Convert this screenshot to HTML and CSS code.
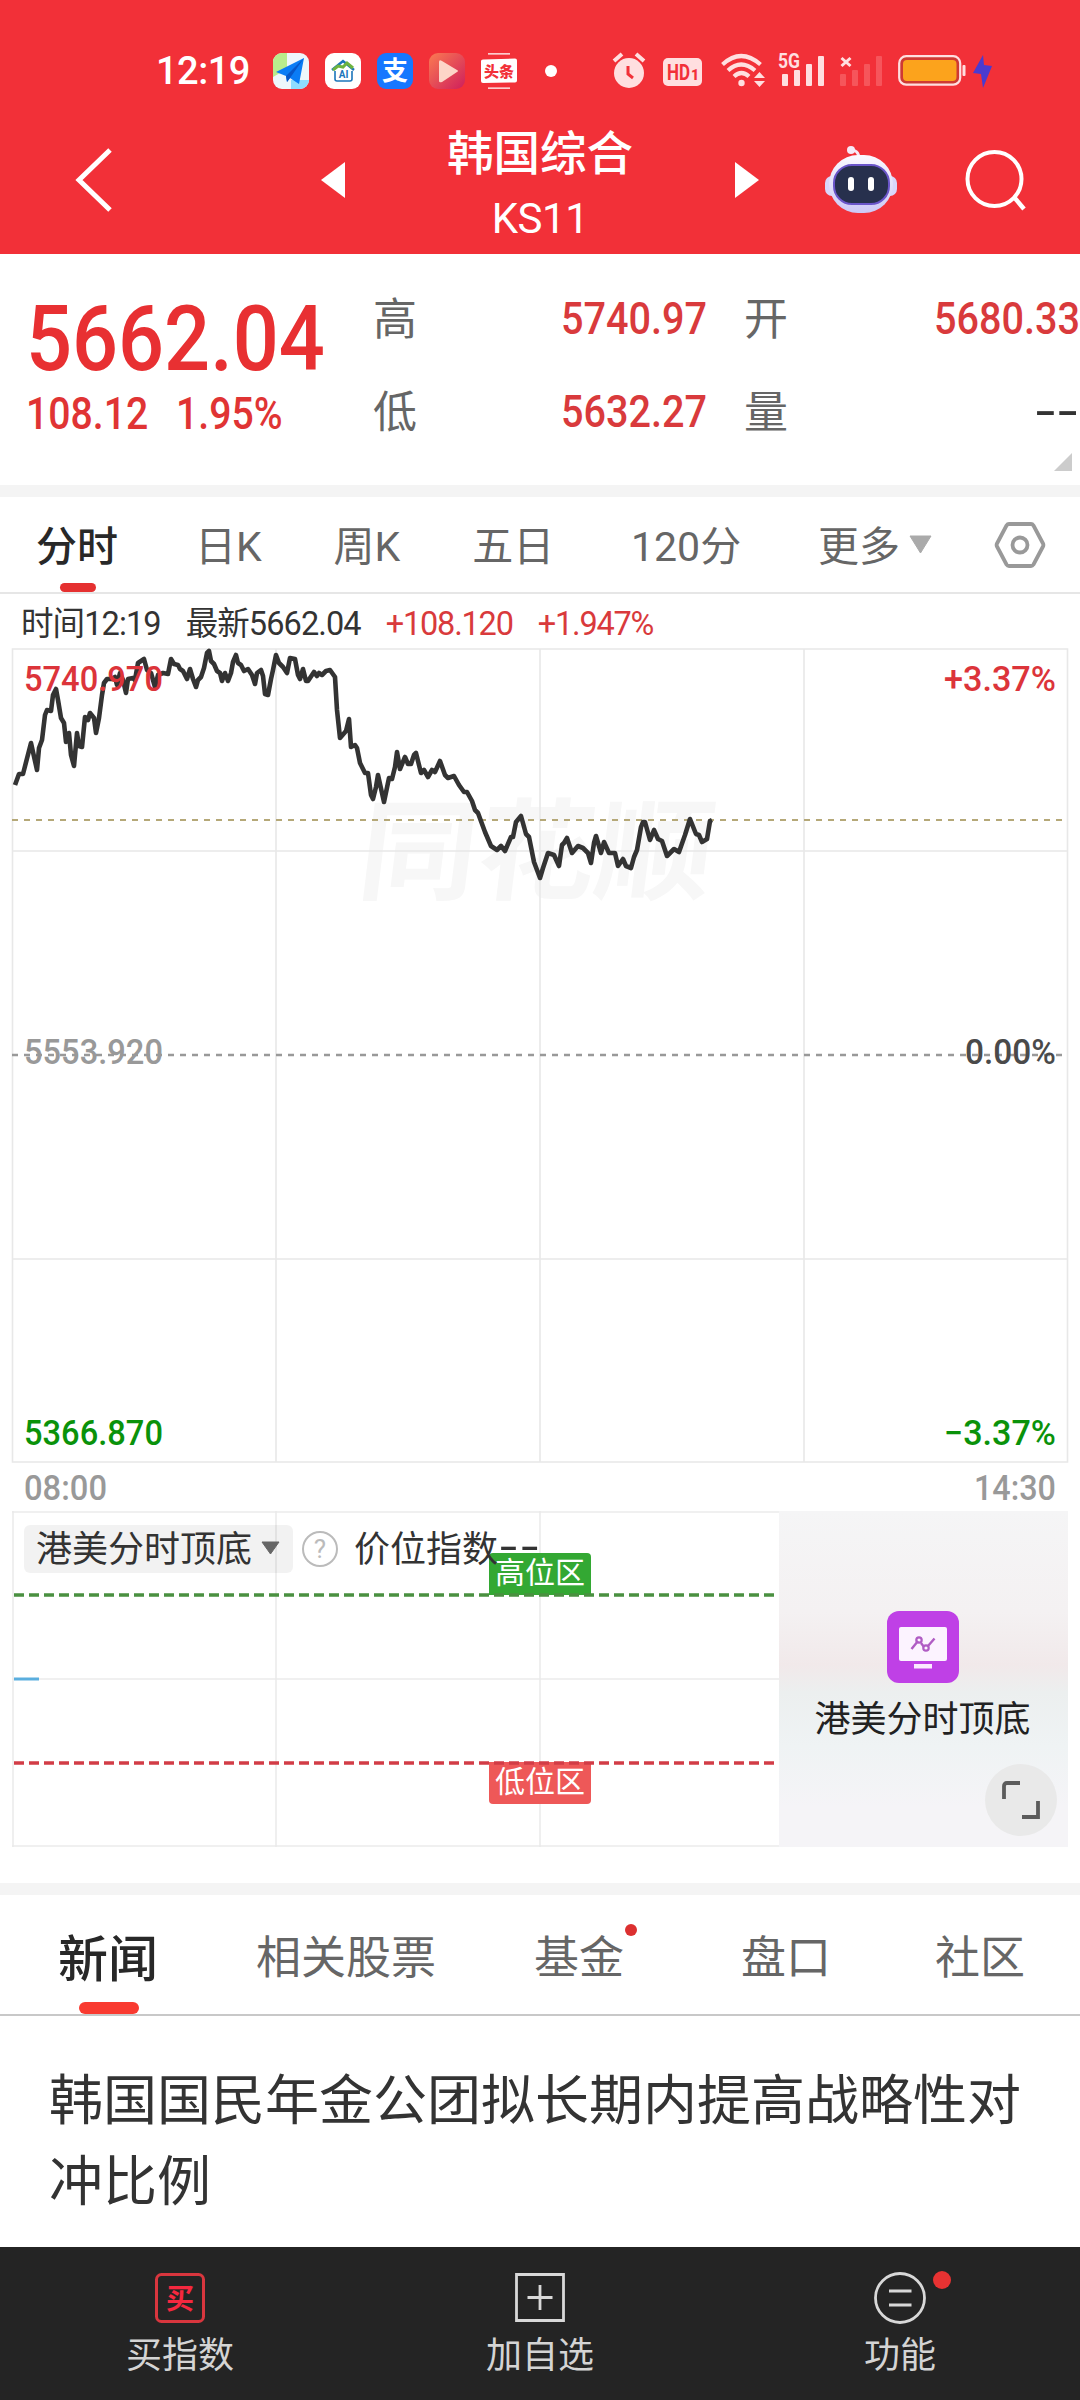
FILE: index.html
```html
<!DOCTYPE html>
<html lang="zh-CN">
<head>
  <meta charset="UTF-8" />
  <meta name="viewport" content="width=device-width, initial-scale=1.0" />
  <title>韩国综合 KS11</title>
  <link rel="stylesheet" href="styles.css">
</head>
<body>
  <header class="top">
    <div class="status">
      <span class="clock">12:19</span>
      <div class="apps">
        <svg width="36" height="36" viewBox="0 0 36 36">
          <rect width="36" height="36" rx="9" fill="#eef6fb"/>
          <path d="M9 0h5v16L0 24V9a9 9 0 0 1 9-9z" fill="#b9ec8c"/>
          <path d="M18 27h18a9 9 0 0 1-9 9h-9z" fill="#8fdcff"/>
          <path d="M31 5L3 19l10 4 1 6 3-4 9 6z" fill="#0a7cf5"/>
          <path d="M31 5L13 23l1 6 3-4z" fill="#0756c8"/>
        </svg>
        <svg width="36" height="36" viewBox="0 0 36 36">
          <rect width="36" height="36" rx="9" fill="#fff"/>
          <path d="M7 17L18 8l11 9" fill="none" stroke="#1b75bb" stroke-width="2.5"/>
          <path d="M8 17l5-4 5 1 4-4 6 5" fill="none" stroke="#6db33f" stroke-width="3"/>
          <path d="M10 18v8q0 2 2 2h13q2 0 2-2v-8" fill="none" stroke="#1b75bb" stroke-width="1.6"/>
          <text x="18.500" y="25" class="app-ai">AI</text>
        </svg>
        <svg width="36" height="36" viewBox="0 0 36 36">
          <rect width="36" height="36" rx="9" fill="#1677ff"/>
          <text x="18" y="27" class="app-pay">支</text>
        </svg>
        <svg width="36" height="36" viewBox="0 0 36 36">
          <defs>
            <linearGradient id="video" x1="0" y1="0" x2="1" y2="1">
              <stop offset="0" stop-color="#fb7a52"/>
              <stop offset="1" stop-color="#cf1f5c"/>
            </linearGradient>
          </defs>
          <rect width="36" height="36" rx="9" fill="url(#video)"/>
          <path d="M10 9q0-3 3-1l15 9q2 1 0 2l-15 10q-3 1-3-1z" fill="#fdd5c8"/>
        </svg>
        <svg width="36" height="36" viewBox="0 0 36 36">
          <path d="M7 .8h22M7 35.200h22" stroke="#fff" stroke-width="1.300"/>
          <path d="M0 8q0-1.500 2-1.500l32-1q2 0 2 2v20q0 2-2 2l-32 .5q-2 0-2-2z" fill="#fff"/>
          <text x="18" y="23.500" class="app-news">头条</text>
        </svg>
      </div>
      <span class="more-dot"></span>
      <div class="signals">
        <svg width="32" height="36" viewBox="0 0 32 36">
          <circle cx="16" cy="20" r="15" fill="#ffdfe0"/>
          <path d="M1 8l8-7M31 8l-8-7" stroke="#ffdfe0" stroke-width="4"/>
          <path d="M15 13v8l5 4" fill="none" stroke="#f23038" stroke-width="3"/>
        </svg>
        <svg class="hd" width="39" height="36" viewBox="0 0 39 36">
          <rect y="5" width="39" height="28" rx="5" fill="#ffdfe0"/>
          <text x="4" y="27" class="hd-text" textLength="23" lengthAdjust="spacingAndGlyphs">HD</text>
          <text x="28" y="27" class="hd-sub">1</text>
        </svg>
        <svg class="wifi" width="44" height="36" viewBox="0 0 44 36">
          <g fill="none" stroke="#ffdfe0" stroke-width="4.200">
            <path d="M1.500 11.500q18.500-17 38 0"/>
            <path d="M7 17.500q13-12 27 0"/>
            <path d="M13 23.500q7.500-7 15 0"/>
          </g>
          <circle cx="20.500" cy="30" r="3.200" fill="#ffdfe0"/>
          <path d="M33 25l5.500-6 5.500 6zM33 28l5.500 6 5.500-6z" fill="#ffdfe0"/>
        </svg>
        <svg class="sig" width="48" height="36" viewBox="0 0 48 36">
          <text x="0" y="15" class="net" textLength="22" lengthAdjust="spacingAndGlyphs">5G</text>
          <g fill="#ffdfe0">
            <rect x="4" y="21" width="6" height="12" rx="1"/>
            <rect x="16" y="17" width="6" height="16" rx="1"/>
            <rect x="28" y="11" width="6" height="22" rx="1"/>
            <rect x="40" y="3" width="6" height="30" rx="1"/>
          </g>
        </svg>
        <svg class="sig2" width="44" height="36" viewBox="0 0 44 36">
          <path d="M1.500 5l9 8M10.500 5l-9 8" stroke="#ffdfe0" stroke-width="3"/>
          <g fill="#f6555b">
            <rect x="0" y="21" width="6" height="12" rx="1"/>
            <rect x="12" y="17" width="6" height="16" rx="1"/>
            <rect x="24" y="11" width="6" height="22" rx="1"/>
            <rect x="36" y="3" width="6" height="30" rx="1"/>
          </g>
        </svg>
        <svg class="battery" width="96" height="36" viewBox="0 0 96 36">
          <rect x="1.200" y="3.200" width="61" height="28.500" rx="7" fill="#cf3a33" stroke="#ffdfe0" stroke-width="2.200"/>
          <rect x="5" y="7" width="53.500" height="21" rx="4" fill="#fca31c"/>
          <rect x="64.500" y="12" width="3" height="11" rx="1" fill="#ffdfe0"/>
          <path d="M85 2l-10 18 8 1 2 14 9-22-8-1z" fill="#4a3bd0"/>
        </svg>
      </div>
    </div>

    <div class="titlebar">
      <svg class="back" width="36" height="64" viewBox="0 0 36 64">
        <path d="M34 2L3 32l31 30" fill="none" stroke="#fff" stroke-width="5"/>
      </svg>
      <svg class="prev" width="24" height="36" viewBox="0 0 24 36"><path d="M24 0v36L0 18z" fill="#fff"/></svg>
      <div class="title">
        <h1>韩国综合</h1>
        <p>KS11</p>
      </div>
      <svg width="24" height="36" viewBox="0 0 24 36"><path d="M0 0v36l24-18z" fill="#fff"/></svg>
      <svg class="robot" width="72" height="68" viewBox="0 0 72 68">
        <defs>
          <linearGradient id="head" x1="0" y1="0" x2="0" y2="1">
            <stop offset="0" stop-color="#fbf9ff"/>
            <stop offset="1" stop-color="#cdc8f6"/>
          </linearGradient>
        </defs>
        <path d="M24 4q10-1 10 9" fill="none" stroke="#f6e9f7" stroke-width="3"/>
        <circle cx="26" cy="4" r="4" fill="#f6e9f7"/>
        <rect x="0" y="30" width="72" height="20" rx="7" fill="#d9d6fb"/>
        <rect x="4" y="9" width="64" height="58" rx="29" fill="url(#head)"/>
        <rect x="9" y="19" width="55" height="39" rx="18" fill="#27304d" stroke="#6a55c9" stroke-width="2"/>
        <rect x="23" y="31" width="6" height="14" rx="3" fill="#fff"/>
        <rect x="43" y="31" width="6" height="14" rx="3" fill="#fff"/>
      </svg>
      <svg class="search" width="62" height="62" viewBox="0 0 62 62">
        <circle cx="28.500" cy="30" r="27" fill="none" stroke="#fff" stroke-width="4"/>
        <path d="M48 48l10 12" stroke="#fff" stroke-width="4.500"/>
      </svg>
    </div>
  </header>

  <section class="quote">
    <div class="quote-main">
      <div class="price">5662.04</div>
      <div class="change"><span>108.12</span><span>1.95%</span></div>
    </div>
    <div class="quote-grid">
      <span class="label">高</span><span class="value">5740.97</span>
      <span class="label second">开</span><span class="value">5680.33</span>
      <span class="label">低</span><span class="value">5632.27</span>
      <span class="label second">量</span><span class="value none">--</span>
    </div>
    <span class="expand"></span>
  </section>

  <nav class="periods">
    <a class="on">分时</a>
    <a>日K</a>
    <a class="near">周K</a>
    <a class="near">五日</a>
    <a>120分</a>
    <a class="more">更多<svg width="23" height="19" viewBox="0 0 23 19"><path d="M1 1h21L11.500 18z" fill="#aaa" stroke="#aaa" stroke-linejoin="round"/></svg></a>
    <svg class="gear" width="50" height="46" viewBox="0 0 50 46">
      <path d="M14 2h22q1.500 0 2.500 1.500l9.500 18q.8 1.500 0 3l-9.500 18Q37.500 44 36 44H14q-1.500 0-2.500-1.500L2 24.500q-.8-1.500 0-3l9.500-18Q12.500 2 14 2z" fill="none" stroke="#999" stroke-width="3.800"/>
      <circle cx="25" cy="23" r="7.500" fill="none" stroke="#999" stroke-width="3.800"/>
    </svg>
  </nav>

  <div class="info">
    <span>时间12:19</span>
    <span>最新5662.04</span>
    <span class="up">+108.120</span>
    <span class="up">+1.947%</span>
  </div>

  <!-- 分时图 -->
  <svg class="chart" width="1080" height="863" viewBox="0 0 1080 863">
    <text x="358" y="243" class="watermark" transform="translate(27 0) skewX(-7)" textLength="354" lengthAdjust="spacingAndGlyphs">同花顺</text>
    <g class="grid">
      <path d="M12.500 1H1067.500V814H12.500z"/>
      <path d="M276 1V814M540 1V814M804 1V814M12 203H1067M12 611H1067"/>
    </g>
    <path d="M12 172H1065" class="last-line"/>
    <path d="M12 407H1065" class="zero-line"/>
    <polyline class="price-line" points="15,137 19,126 23,126 31,95 37,122 39,100 42,92 45,67 47,62 51,63 53,47 56,41 58,52 61,70 64,75 66,94 69,85 71,107 74,118 77,85 79,98 82,99 85,69 88,72 90,65 94,70 96,85 99,70 102,47 104,35 107,31 112,31 115,29 117,37 120,25 123,32 126,45 128,31 133,30 135,32 138,15 144,11 147,22 151,25 155,39 158,27 163,25 168,26 171,11 174,16 178,17 180,21 183,23 187,31 190,21 193,31 196,39 198,32 201,29 204,20 207,5 209,3 211,13 214,16 217,23 220,25 222,33 225,25 228,33 231,25 233,14 236,7 238,15 241,17 244,23 248,21 252,27 255,36 257,25 261,22 263,28 265,46 268,47 271,31 273,22 276,7 279,15 283,19 287,25 290,10 295,11 298,27 300,31 303,21 306,33 308,33 314,24 317,28 319,25 322,27 326,23 330,22 335,29 337,62 340,90 346,83 349,71 351,99 355,97 357,100 360,115 362,119 365,125 368,125 371,147 373,151 376,139 378,127 384,154 389,130 392,131 395,119 397,104 400,121 405,109 408,116 411,116 414,107 416,105 421,125 424,122 428,129 432,122 435,124 440,113 445,127 448,130 454,128 459,137 464,144 467,144 472,153 475,162 478,165 485,184 491,198 497,202 501,198 505,203 511,189 513,189 516,174 521,168 526,186 529,189 534,214 540,230 543,220 548,205 554,207 559,218 562,197 564,195 567,190 572,205 578,198 583,200 588,205 591,215 594,195 596,188 601,205 604,194 609,205 615,205 618,218 623,211 626,218 631,220 634,209 637,202 641,179 643,174 645,174 650,192 654,182 658,191 662,193 667,208 674,201 679,204 685,187 690,171 696,186 699,187 702,194 707,191 710,173 712,172"/>
    <g class="axis">
      <text x="24" y="43" class="up" textLength="139" lengthAdjust="spacingAndGlyphs">5740.970</text>
      <text x="24" y="416" class="flat" textLength="139" lengthAdjust="spacingAndGlyphs">5553.920</text>
      <text x="24" y="797" class="down" textLength="139" lengthAdjust="spacingAndGlyphs">5366.870</text>
      <text x="944" y="43" class="up" textLength="112" lengthAdjust="spacingAndGlyphs">+3.37%</text>
      <text x="965" y="416" class="zero" textLength="91" lengthAdjust="spacingAndGlyphs">0.00%</text>
      <text x="944" y="797" class="down" textLength="112" lengthAdjust="spacingAndGlyphs">−3.37%</text>
      <text x="24" y="852" class="flat" textLength="83" lengthAdjust="spacingAndGlyphs">08:00</text>
      <text x="974" y="852" class="flat" textLength="82" lengthAdjust="spacingAndGlyphs">14:30</text>
    </g>
  </svg>

  <!-- 港美分时顶底 -->
  <section class="indicator">
    <div class="sub">
      <svg class="sub-grid" width="767" height="336" viewBox="0 0 767 336">
        <path d="M0 1H767M1 0V336M0 335H767M0 168H767M264 0V336M528 0V336" stroke="#ebebeb" stroke-width="1.600"/>
        <path d="M2 168h25" stroke="#5aaede" stroke-width="3"/>
        <path d="M477 84V46q0-4 4-4h94q4 0 4 4v38z" fill="#33a833"/>
        <path d="M477 251v38q0 4 4 4h94q4 0 4-4v-38z" fill="#ee5858"/>
        <path d="M2 84H762" stroke="#4a9040" stroke-width="3.400" stroke-dasharray="10 5"/>
        <path d="M2 252H762" stroke="#d23c46" stroke-width="3.400" stroke-dasharray="10 5"/>
        <text x="528" y="72" class="zone">高位区</text>
        <text x="528" y="281" class="zone">低位区</text>
      </svg>
      <div class="sub-head">
        <span class="pill">港美分时顶底<svg width="19" height="14" viewBox="0 0 19 14"><path d="M1 1h17L9.500 13z" fill="#666" stroke="#666" stroke-linejoin="round"/></svg></span>
        <span class="help">?</span>
        <span class="index">价位指数<span class="dashes">--</span></span>
      </div>
    </div>
    <div class="promo">
      <svg width="72" height="72" viewBox="0 0 72 72">
        <rect width="72" height="72" rx="12" fill="#bf40e6"/>
        <rect x="12" y="16" width="48" height="34" rx="2" fill="#fcf3ff"/>
        <rect x="27" y="53" width="18" height="4.500" fill="#fbe9ff"/>
        <path d="M24.500 38l6.500-8M34 32l3 4M41 35l6.500-7.500" fill="none" stroke="#b05cc4" stroke-width="2.400"/>
        <circle cx="32" cy="29" r="2.700" fill="none" stroke="#b05cc4" stroke-width="2.200"/>
        <circle cx="39" cy="37" r="2.700" fill="none" stroke="#b05cc4" stroke-width="2.200"/>
      </svg>
      <p>港美分时顶底</p>
      <span class="full">
        <svg width="38" height="38" viewBox="0 0 38 38"><path d="M2 18V5q0-3 3-3h13M36 20v16H20" fill="none" stroke="#5c5c5c" stroke-width="3.800"/></svg>
      </span>
    </div>
  </section>

  <nav class="news-tabs">
    <a class="on">新闻</a>
    <a>相关股票</a>
    <a class="fund">基金</a>
    <a>盘口</a>
    <a>社区</a>
  </nav>

  <article class="news">
    <h2>韩国国民年金公团拟长期内提高战略性对冲比例</h2>
  </article>

  <footer class="toolbar">
    <a>
      <svg width="50" height="52" viewBox="0 0 50 52">
        <rect x="1.500" y="2.500" width="47" height="47" rx="5" fill="none" stroke="#d9363e" stroke-width="3"/>
        <text x="25" y="36.500" class="buy">买</text>
      </svg>
      买指数
    </a>
    <a>
      <svg width="50" height="52" viewBox="0 0 50 52">
        <path d="M1.500 2.500h47v46h-47zM25 13v25M12.500 25.500h25" fill="none" stroke="#d8d8d8" stroke-width="2.800"/>
      </svg>
      加自选
    </a>
    <a class="func">
      <svg width="52" height="52" viewBox="0 0 52 52">
        <circle cx="26" cy="26" r="24.500" fill="none" stroke="#d8d8d8" stroke-width="2.800"/>
        <path d="M15 19h22.500M15 33h22.500" stroke="#d8d8d8" stroke-width="3"/>
      </svg>
      功能
    </a>
  </footer>
</body>
</html>
```

FILE: styles.css
```css
html, body {
  margin: 0;
  padding: 0;
}
*, *::before, *::after {
  box-sizing: border-box;
}
body {
  width: 1080px;
  height: 2400px;
  overflow: hidden;
  display: flex;
  flex-direction: column;
  background: #fff;
  color: #333;
  font-family: Roboto, "Noto Sans CJK SC", sans-serif;
}
svg {
  display: block;
  flex-shrink: 0;
  overflow: visible;
}
h1, h2, p {
  margin: 0;
}

.top {
  height: 254px;
  background: #f23038;
  color: #fff;
}
.status {
  display: flex;
  align-items: center;
  height: 126px;
  padding: 16px 0 0 156px;
}
.clock {
  width: 117px;
  font-size: 38px;
  font-weight: 500;
  line-height: 38px;
  letter-spacing: -0.5px;
}
.apps {
  display: flex;
  gap: 16px;
}
.app-ai {
  font: 700 10px Roboto, sans-serif;
  fill: #1b75bb;
  text-anchor: middle;
}
.app-pay {
  font: 700 26px "Noto Sans CJK SC", sans-serif;
  fill: #fff;
  text-anchor: middle;
}
.app-news {
  font: 900 15px "Noto Sans CJK SC", sans-serif;
  fill: #f23038;
  text-anchor: middle;
}
.more-dot {
  width: 12px;
  height: 12px;
  margin-left: 28px;
  border-radius: 50%;
  background: #fff;
}
.signals {
  display: flex;
  margin-left: 56px;
}
.hd { margin-left: 18px; }
.wifi { margin-left: 19px; }
.sig { margin-left: 13px; }
.sig2 { margin-left: 14px; }
.battery { margin-left: 14px; }
.hd-text {
  font: 700 22px Roboto, sans-serif;
  fill: #f23038;
}
.hd-sub {
  font: 900 14px Roboto, sans-serif;
  fill: #f23038;
}
.net {
  font: 700 20px Roboto, sans-serif;
  fill: #ffdfe0;
}

.titlebar {
  display: flex;
  align-items: center;
  height: 108px;
  padding-left: 76px;
}
.prev {
  margin-left: 209px;
}
.title {
  width: 390px;
  padding-top: 14px;
  text-align: center;
}
.title h1 {
  font-size: 46.500px;
  font-weight: 500;
  line-height: 64px;
}
.title p {
  font-size: 42px;
  line-height: 66px;
  letter-spacing: -0.5px;
}
.robot {
  margin-left: 66px;
}
.search {
  margin-left: 69px;
}

.quote {
  position: relative;
  display: flex;
  height: 243px;
  border-bottom: 12px solid #f4f4f4;
}
.quote-main {
  width: 373px;
  padding: 38px 0 0 26px;
  color: #e03434;
  font-weight: 500;
}
/* 数字用窄体效果 */
.price, .change {
  transform: scaleX(0.9);
  transform-origin: left;
}
.price {
  font-size: 90px;
  line-height: 96px;
  color: #e83032;
}
.change {
  display: flex;
  gap: 31px;
  margin-top: 2px;
  font-size: 43.500px;
  line-height: 50px;
}
.quote-grid {
  display: grid;
  grid-template-columns: 44px 290px 82px 291px;
  grid-template-rows: 93px 93px;
  align-items: center;
  height: 186px;
  margin-top: 18px;
}
.label {
  padding-bottom: 6px;
  font-size: 44px;
  color: #666;
}
.label.second {
  padding-left: 37px;
}
.value {
  text-align: right;
  font-size: 44.500px;
  font-weight: 500;
  transform: scaleX(0.89);
  transform-origin: right;
  color: #d93a3c;
}
.value.none {
  color: #333;
  font-size: 52px;
  font-weight: 400;
  line-height: 54px;
  transform: scaleX(1.35);
  letter-spacing: 2px;
}
.expand {
  position: absolute;
  right: 8px;
  bottom: 14px;
  border-left: 18px solid transparent;
  border-bottom: 18px solid #ccc;
}

.periods {
  display: flex;
  justify-content: space-between;
  align-items: center;
  height: 97px;
  padding: 0 35px 0 36px;
  border-bottom: 2px solid #e6e6e6;
  font-size: 41px;
  color: #666;
}
.periods a, .news-tabs a {
  position: relative;
  display: flex;
  align-items: center;
  height: 100%;
}
.periods a {
  padding-bottom: 4px;
}
.periods .near {
  margin-left: -5px;
}
.periods .on, .news-tabs .on {
  font-weight: 500;
  color: #282828;
}
.periods .on::after, .news-tabs .on::after {
  content: "";
  position: absolute;
  left: 50%;
  bottom: 0;
  width: 36px;
  height: 9px;
  margin-left: -17px;
  border-radius: 5px;
  background: #e53030;
}
.more svg {
  margin: 4px 0 0 9px;
}
.gear {
  margin-left: -14px;
}

.info {
  display: flex;
  align-items: baseline;
  gap: 25px;
  height: 54px;
  padding: 8px 0 0 21px;
  font-size: 32.500px;
  line-height: 44px;
  letter-spacing: -0.9px;
  white-space: nowrap;
}
.info .up {
  color: #d93a3c;
  letter-spacing: -1.200px;
}

.grid path {
  fill: none;
  stroke: #e8e8e8;
  stroke-width: 1.600;
}
.last-line {
  stroke: #b5a878;
  stroke-width: 2;
  stroke-dasharray: 6 6;
}
.zero-line {
  stroke: #999;
  stroke-width: 2.400;
  stroke-dasharray: 6 6;
}
.price-line {
  fill: none;
  stroke: #333;
  stroke-width: 4.600;
  stroke-linejoin: round;
}
.watermark {
  font: 700 110px "Noto Sans CJK SC", sans-serif;
  fill: #f7f7f7;
}
.axis {
  font-size: 35px;
  font-weight: 500;
}
.axis .up { fill: #dc343a; }
.axis .down { fill: #0a920a; }
.axis .flat { fill: #999; }
.axis .zero { fill: #4a4a4a; }

.indicator {
  display: flex;
  height: 384px;
  padding-left: 12px;
  border-bottom: 12px solid #f4f4f4;
}
.sub {
  position: relative;
  width: 767px;
  height: 336px;
}
/* 指标名称浮在网格上 */
.sub-head {
  position: absolute;
  top: 12px;
  left: 12px;
  display: flex;
  align-items: center;
  font-size: 36px;
  line-height: 48px;
}
.pill {
  display: flex;
  align-items: center;
  width: 269px;
  height: 48px;
  padding: 3px 0 0 12px;
  border-radius: 6px;
  background: rgba(0, 0, 0, 0.05);
}
.pill svg {
  margin: 0 0 4px 9px;
}
.help {
  width: 36px;
  height: 36px;
  margin-left: 9px;
  border: 2px solid #bbb;
  border-radius: 50%;
  text-align: center;
  font-size: 26px;
  line-height: 32px;
  color: #bbb;
}
.index {
  margin-left: 16px;
  padding-top: 3px;
  white-space: nowrap;
}
.dashes {
  display: inline-block;
  margin-left: 2px;
  font-size: 44px;
  line-height: 36px;
  letter-spacing: 3px;
  transform: scaleX(1.4);
  transform-origin: left;
}
.zone {
  font-size: 30px;
  fill: #fff;
  text-anchor: middle;
}
.promo {
  position: relative;
  display: flex;
  flex-direction: column;
  align-items: center;
  width: 289px;
  height: 336px;
  padding: 100px 2px 0 0;
  background: linear-gradient(#f5f5f6 0%, #f4f1f2 30%, #f1e9ea 46%, #ecefef 54%, #eff3f4 70%, #f5f4f7 88%);
}
.promo p {
  margin-top: 11px;
  font-size: 36px;
  line-height: 52px;
  color: #222;
}
.full {
  position: absolute;
  right: 11px;
  bottom: 11px;
  display: flex;
  align-items: center;
  justify-content: center;
  width: 72px;
  height: 72px;
  border-radius: 50%;
  background: #e9e9e9;
}

.news-tabs {
  display: flex;
  gap: 98px;
  align-items: center;
  height: 121px;
  padding-left: 58px;
  border-bottom: 2px solid #c8c8c8;
  font-size: 45px;
  color: #666;
}
.news-tabs .on {
  font-size: 50px;
}
.news-tabs .on::after {
  width: 60px;
  height: 12px;
  margin-left: -29px;
  border-radius: 6px;
  background: #f93a30;
}
.news-tabs .fund {
  margin-right: 19px;
}
.news-tabs a:last-child {
  margin-left: 6px;
}
.fund::after {
  content: "";
  position: absolute;
  top: 29px;
  right: -13px;
  width: 12px;
  height: 12px;
  border-radius: 50%;
  background: #dc3030;
}

.news {
  flex: 1;
  padding: 45px 48px 0 49px;
}
.news h2 {
  font-size: 54px;
  font-weight: 400;
  line-height: 81px;
}

.toolbar {
  display: flex;
  height: 153px;
  background: #242424;
}
.toolbar a {
  position: relative;
  flex: 1;
  display: flex;
  flex-direction: column;
  align-items: center;
  padding: 25px 0 0;
  font-size: 36px;
  line-height: 64px;
  color: #d4d4d4;
}
.buy {
  font: 700 28px "Noto Sans CJK SC", sans-serif;
  fill: #f5283f;
  text-anchor: middle;
}
.func::after {
  content: "";
  position: absolute;
  top: 24px;
  left: 213px;
  width: 18px;
  height: 18px;
  border-radius: 50%;
  background: #e83232;
}
```
